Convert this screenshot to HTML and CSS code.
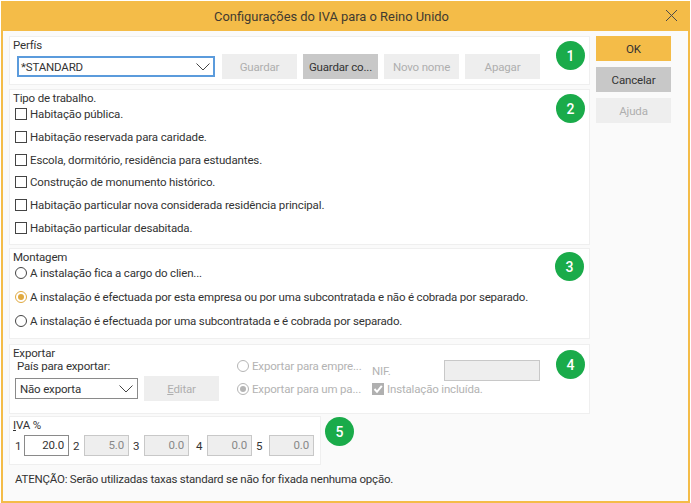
FILE: index.html
```html
<!DOCTYPE html>
<html lang="pt">
<head>
    <meta charset="UTF-8">
    <title>Configurações do IVA para o Reino Unido</title>
    <link rel="stylesheet" href="styles.css">
</head>
<body>
    <div class="dialog">
        <div class="titlebar">
            <span class="title">Configurações do IVA para o Reino Unido</span>
            <svg class="close" width="13" height="13" viewBox="0 0 13 13"><path d="M1 1 L12 12 M12 1 L1 12" stroke="#4a4a4a" stroke-width="1" fill="none"/></svg>
        </div>
        <div class="content">
            <div class="main">
                <div class="panel panel-profile">
                    <div class="legend">Perfís</div>
                    <div class="profile-row">
                        <div class="select select-focus select-profile">
                            <span>*STANDARD</span>
                            <svg width="14" height="8" viewBox="0 0 14 8"><path d="M0.5 0.5 L7 7 L13.5 0.5" stroke="#444" fill="none"/></svg>
                        </div>
                        <div class="btn btn-off btn-wide">Guardar</div>
                        <div class="btn btn-grey btn-wide">Guardar co...</div>
                        <div class="btn btn-off btn-wide">Novo nome</div>
                        <div class="btn btn-off btn-wide">Apagar</div>
                    </div>
                    <span class="badge badge-1">1</span>
                </div>

                <div class="panel panel-work">
                    <div class="legend">Tipo de trabalho.</div>
                    <div class="check-list">
                        <label class="option"><span class="box"></span>Habitação pública.</label>
                        <label class="option"><span class="box"></span>Habitação reservada para caridade.</label>
                        <label class="option"><span class="box"></span>Escola, dormitório, residência para estudantes.</label>
                        <label class="option"><span class="box"></span>Construção de monumento histórico.</label>
                        <label class="option"><span class="box"></span>Habitação particular nova considerada residência principal.</label>
                        <label class="option"><span class="box"></span>Habitação particular desabitada.</label>
                    </div>
                    <span class="badge badge-2">2</span>
                </div>

                <div class="panel panel-mount">
                    <div class="legend">Montagem</div>
                    <div class="radio-list">
                        <label class="option"><span class="radio"></span>A instalação fica a cargo do clien...</label>
                        <label class="option"><span class="radio radio-on"></span>A instalação é efectuada por esta empresa ou por uma subcontratada e não é cobrada por separado.</label>
                        <label class="option"><span class="radio"></span>A instalação é efectuada por uma subcontratada e é cobrada por separado.</label>
                    </div>
                    <span class="badge badge-3">3</span>
                </div>

                <div class="panel panel-export">
                    <div class="legend">Exportar</div>
                    <div class="export-grid">
                        <div class="export-left">
                            <div class="sublabel">País para exportar:</div>
                            <div class="export-row">
                                <div class="select select-export">
                                    <span>Não exporta</span>
                                    <svg width="14" height="8" viewBox="0 0 14 8"><path d="M0.5 0.5 L7 7 L13.5 0.5" stroke="#444" fill="none"/></svg>
                                </div>
                                <div class="btn btn-off btn-edit"><span><u>E</u>ditar</span></div>
                            </div>
                        </div>
                        <div class="export-mid">
                            <label class="option option-off"><span class="radio radio-off"></span>Exportar para empre...</label>
                            <label class="option option-off"><span class="radio radio-off radio-dot"></span>Exportar para um pa...</label>
                        </div>
                        <div class="export-right">
                            <div class="nif-row">
                                <span class="nif">NIF.</span>
                                <span class="field field-nif"></span>
                            </div>
                            <label class="option option-off">
                                <span class="box box-off">
                                    <svg width="12" height="12" viewBox="0 0 12 12"><path d="M2.5 6 L5 8.8 L9.8 2.8" stroke="#fff" stroke-width="2" fill="none"/></svg>
                                </span>Instalação incluída.
                            </label>
                        </div>
                    </div>
                    <span class="badge badge-4">4</span>
                </div>

                <div class="panel panel-vat">
                    <div class="legend"><u>I</u>VA %</div>
                    <div class="vat-row">
                        <span class="vat-num vat-num-1">1</span><span class="field field-on">20.0</span>
                        <span class="vat-num">2</span><span class="field">5.0</span>
                        <span class="vat-num">3</span><span class="field">0.0</span>
                        <span class="vat-num vat-num-4">4</span><span class="field">0.0</span>
                        <span class="vat-num vat-num-5">5</span><span class="field">0.0</span>
                    </div>
                    <span class="badge badge-5">5</span>
                </div>

                <div class="notice">ATENÇÃO: Serão utilizadas taxas standard se não for fixada nenhuma opção.</div>
            </div>

            <div class="side">
                <div class="btn btn-ok">OK</div>
                <div class="btn btn-grey">Cancelar</div>
                <div class="btn btn-off">Ajuda</div>
            </div>
        </div>
    </div>
</body>
</html>
```

FILE: styles.css
```css
html, body {
    margin: 0;
    padding: 0;
    background: #fff;
}
body {
    font-family: "Roboto", "Noto Sans", sans-serif;
    font-size: 11.5px;
    letter-spacing: -0.17px;
    color: #333;
    width: 691px;
    height: 503px;
    overflow: hidden;
}
.dialog {
    box-sizing: border-box;
    width: 689px;
    height: 502px;
    margin: 1px 0 0 1px;
    border: 2px solid #f4bc48;
    border-top: none;
    background: #fafafa;
}
.titlebar {
    height: 30px;
    margin: 0 -2px;
    padding-right: 28px;
    background: #f4bc48;
    display: flex;
    align-items: center;
    justify-content: center;
    position: relative;
}
.title {
    font-size: 12.9px;
    letter-spacing: 0;
    color: #3f3a30;
}
.close {
    position: absolute;
    right: 12px;
    top: 8px;
}
.content {
    display: flex;
    gap: 6px;
    padding: 5px 0 0 6px;
}
.main {
    width: 581px;
    display: flex;
    flex-direction: column;
}
.side {
    width: 75px;
    display: flex;
    flex-direction: column;
    gap: 6px;
}
.side .btn {
    height: 25px;
}
.panel {
    box-sizing: border-box;
    position: relative;
    background: #fff;
    border: 1px solid #efefef;
    padding: 1px 3px;
}
.panel-profile { height: 49px; }
.panel-work { height: 156px; margin-top: 4px; }
.panel-mount { height: 91px; margin-top: 3px; }
.panel-export { height: 70px; margin-top: 5px; }
.panel-vat { height: 49px; width: 312px; margin-top: 2px; }
.legend {
    line-height: 14px;
}
.btn {
    box-sizing: border-box;
    display: flex;
    align-items: center;
    justify-content: center;
    height: 25px;
    white-space: nowrap;
}
.btn-off { background: #eee; color: #aeaeae; }
.btn-grey { background: #c8c8c8; color: #333; }
.btn-ok { background: #f4bc48; color: #333; }
.btn-wide { width: 75px; }
.profile-row {
    display: flex;
    align-items: center;
    gap: 6px;
    margin: 2px 0 0 4px;
}
.select {
    box-sizing: border-box;
    display: flex;
    align-items: center;
    justify-content: space-between;
    height: 21px;
    padding: 0 4px 0 4px;
    background: #fff;
    border: 1px solid #8a8a8a;
}
.select-focus { border: 2px solid #5b9bdc; padding: 0 3px 0 2px; }
.select-profile { width: 198px; margin-right: 1px; }
.select-export { width: 123px; }
.option {
    display: flex;
    align-items: center;
    height: 14px;
    white-space: nowrap;
}
.check-list {
    display: flex;
    flex-direction: column;
    gap: 8.8px;
    padding: 2px 0 0 2px;
    letter-spacing: -0.14px;
}
.radio-list {
    display: flex;
    flex-direction: column;
    gap: 10.2px;
    padding: 2px 0 0 2px;
}
.box {
    box-sizing: border-box;
    flex: none;
    width: 12px;
    height: 12px;
    border: 1px solid #444;
    margin-right: 3px;
    display: block;
}
.box-off {
    background: #b0b0b0;
    border-color: #b0b0b0;
}
.box-off svg {
    display: block;
    margin: -1px;
}
.radio {
    box-sizing: border-box;
    flex: none;
    width: 12px;
    height: 12px;
    border: 1px solid #444;
    border-radius: 50%;
    margin-right: 3px;
    position: relative;
}
.radio-on { border-color: #e0a93f; }
.radio-on::after, .radio-dot::after {
    content: "";
    position: absolute;
    left: 2px;
    top: 2px;
    width: 6px;
    height: 6px;
    border-radius: 50%;
    background: #e0a93f;
}
.radio-off { border-color: #b5b5b5; }
.radio-dot::after { background: #b5b5b5; }
.option-off { color: #b3b3b3; }
.export-grid {
    display: flex;
}
.export-left {
    width: 224px;
    flex: none;
}
.sublabel {
    line-height: 13px;
    margin-left: 4px;
}
.export-row {
    display: flex;
    gap: 6px;
    align-items: center;
    margin: 3px 0 0 2px;
}
.btn-edit { width: 75px; }
.export-mid {
    width: 135px;
    flex: none;
    display: flex;
    flex-direction: column;
    gap: 9px;
    margin-top: -1px;
}
.export-right {
    display: flex;
    flex-direction: column;
    gap: 1px;
}
.nif-row {
    display: flex;
    align-items: center;
    height: 21px;
}
.nif {
    color: #b3b3b3;
    width: 72px;
}
.field {
    box-sizing: border-box;
    display: block;
    flex: none;
    width: 45px;
    height: 21px;
    line-height: 19px;
    padding-right: 4px;
    text-align: right;
    background: #eee;
    border: 1px solid #c8c8c8;
    color: #888;
}
.field-nif { width: 96px; }
.field-on {
    background: #fff;
    border-color: #8a8a8a;
    color: #333;
}
.vat-row {
    display: flex;
    align-items: center;
    margin: 3px 0 0 2px;
}
.vat-num {
    box-sizing: border-box;
    flex: none;
    width: 15px;
    padding-left: 4px;
}
.vat-num-1 { width: 9px; padding-left: 0; }
.vat-num-4 { width: 18px; padding-left: 7px; }
.vat-num-5 { width: 17px; }
.notice {
    margin: 7px 0 0 6px;
    line-height: 14px;
    letter-spacing: -0.22px;
}
.badge {
    position: absolute;
    width: 29px;
    height: 29px;
    border-radius: 50%;
    background: #1aab4a;
    color: #fff;
    font-size: 14px;
    font-weight: 500;
    letter-spacing: 0;
    display: flex;
    align-items: center;
    justify-content: center;
}
.badge-1 { left: 546px; top: 4px; }
.badge-2 { left: 546px; top: 4px; }
.badge-3 { left: 545px; top: 3px; }
.badge-4 { left: 546px; top: 5px; }
.badge-5 { left: 315px; top: 0; }
```
